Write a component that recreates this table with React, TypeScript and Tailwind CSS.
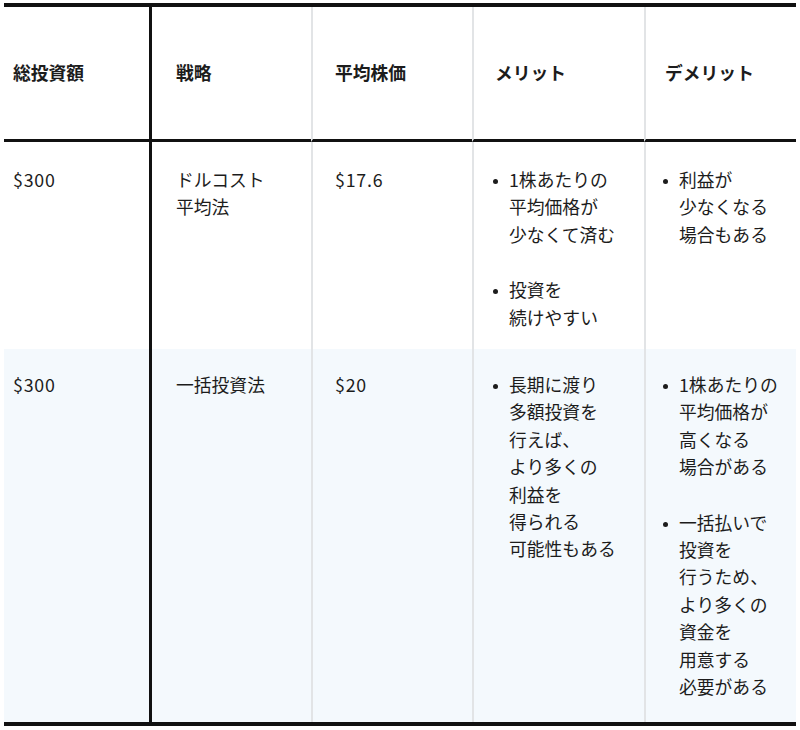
import React from "react";

const font = { fontFamily: '"Noto Sans CJK JP", "Noto Sans", sans-serif' };

function Bullets({ items }: { items: string[][] }) {
  return (
    <ul className="flex flex-col gap-[28px]">
      {items.map((lines, i) => (
        <li key={i} className="flex items-start">
          <span className="w-[16px] shrink-0 pt-[13px]">
            <span className="block h-[5px] w-[5px] rounded-full bg-[#1c1c1c]" />
          </span>
          <span>
            {lines.map((l, j) => (
              <span key={j} className="block whitespace-nowrap">
                {l}
              </span>
            ))}
          </span>
        </li>
      ))}
    </ul>
  );
}

export default function App() {
  const head = "flex items-center border-b-[3px] border-[#111] font-bold";
  return (
    <div className="bg-white pt-[3px] pl-[4px]" style={font}>
      <div className="w-[792px] border-t-[4px] border-b-[4px] border-[#111] text-[17.8px] leading-[27.4px] text-[#1c1c1c]">
        <div className="grid grid-cols-[148px_159px_161px_172px_152px]">
          {/* header */}
          <div className={`${head} h-[135px] border-r-[3px] pl-[9px]`}>総投資額</div>
          <div className={`${head} h-[135px] pl-[24px]`}>戦略</div>
          <div className={`${head} h-[135px] border-l-2 border-l-[#e2e4e6] pl-[22px]`}>平均株価</div>
          <div className={`${head} h-[135px] border-l-2 border-l-[#e2e4e6] pl-[21px]`}>メリット</div>
          <div className={`${head} h-[135px] border-l-2 border-l-[#e2e4e6] pl-[19px]`}>デメリット</div>

          {/* row 1 */}
          <div className="h-[207px] border-r-[3px] border-[#111] pl-[9px] pt-[24px] tracking-[0.8px]">$300</div>
          <div className="pl-[24px] pt-[24px]">
            <span className="block">ドルコスト</span>
            <span className="block">平均法</span>
          </div>
          <div className="border-l-2 border-[#e2e4e6] pl-[22px] pt-[24px] tracking-[0.8px]">$17.6</div>
          <div className="border-l-2 border-[#e2e4e6] pl-[19px] pt-[24px]">
            <Bullets
              items={[
                ["1株あたりの", "平均価格が", "少なくて済む"],
                ["投資を", "続けやすい"],
              ]}
            />
          </div>
          <div className="border-l-2 border-[#e2e4e6] pl-[17px] pt-[24px]">
            <Bullets items={[["利益が", "少なくなる", "場合もある"]]} />
          </div>

          {/* row 2 */}
          <div className="h-[373px] border-r-[3px] border-[#111] bg-[#f4f9fd] pl-[9px] pt-[22px] tracking-[0.8px]">$300</div>
          <div className="bg-[#f4f9fd] pl-[24px] pt-[22px]">一括投資法</div>
          <div className="border-l-2 border-[#e2e4e6] bg-[#f4f9fd] pl-[22px] pt-[22px] tracking-[0.8px]">$20</div>
          <div className="border-l-2 border-[#e2e4e6] bg-[#f4f9fd] pl-[19px] pt-[22px]">
            <Bullets
              items={[
                ["長期に渡り", "多額投資を", "行えば、", "より多くの", "利益を", "得られる", "可能性もある"],
              ]}
            />
          </div>
          <div className="border-l-2 border-[#e2e4e6] bg-[#f4f9fd] pl-[17px] pt-[22px]">
            <Bullets
              items={[
                ["1株あたりの", "平均価格が", "高くなる", "場合がある"],
                ["一括払いで", "投資を", "行うため、", "より多くの", "資金を", "用意する", "必要がある"],
              ]}
            />
          </div>
        </div>
      </div>
    </div>
  );
}
